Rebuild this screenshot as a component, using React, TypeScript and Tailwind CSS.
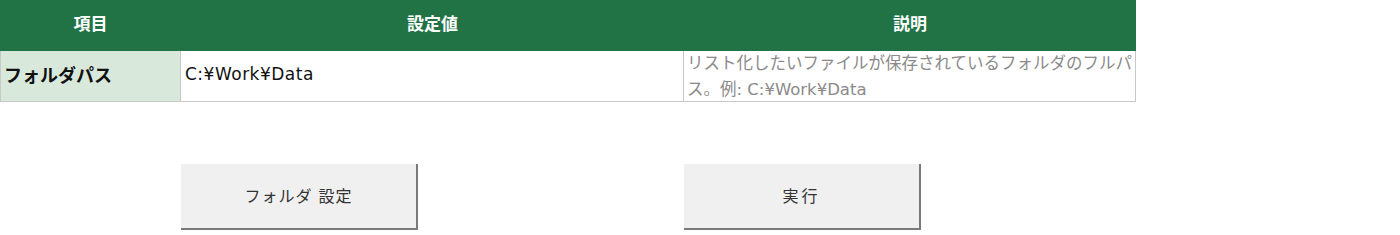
import React from "react";

const font = { fontFamily: '"DejaVu Sans", "Noto Sans CJK JP", sans-serif' };

export default function App() {
  return (
    <div className="w-[1400px] h-[235px] bg-white" style={font}>
      <div className="grid grid-cols-[181px_503px_452px]">
        <div className="h-[51px] bg-[#217346] flex items-center justify-center pb-[2px] text-white font-bold text-[17px]">項目</div>
        <div className="h-[51px] bg-[#217346] flex items-center justify-center pb-[2px] text-white font-bold text-[17px]">設定値</div>
        <div className="h-[51px] bg-[#217346] flex items-center justify-center pb-[2px] text-white font-bold text-[17px]">説明</div>

        <div className="h-[51px] bg-[#d8e9dc] border-l border-b border-r border-[#c8c8c8] flex items-center pl-[3px] pb-[2px] text-[18px] font-bold text-[#111]">フォルダパス</div>
        <div className="h-[51px] bg-white border-b border-r border-[#c8c8c8] flex items-center pl-[4px] pb-[2px] text-[17px] tracking-[0.5px] text-[#111]">C:¥Work¥Data</div>
        <div className="h-[51px] bg-white border-b border-r border-[#c8c8c8] pl-[3px] text-[16.5px] leading-[26px] text-[#8a8a8a] overflow-hidden whitespace-nowrap">
          <div>リスト化したいファイルが保存されているフォルダのフルパ</div>
          <div>ス。例: C:¥Work¥Data</div>
        </div>
      </div>

      <div className="grid grid-cols-[181px_503px_452px] mt-[62px]">
        <div />
        <div>
          <button className="w-[237px] h-[66px] bg-[#f0f0f0] border-r-2 border-b-2 border-[#7a7a7a] flex items-center justify-center pt-[1px] text-[16px] text-[#333] tracking-[1px]">
            フォルダ 設定
          </button>
        </div>
        <div>
          <button className="w-[237px] h-[66px] bg-[#f0f0f0] border-r-2 border-b-2 border-[#7a7a7a] flex items-center justify-center pt-[1px] text-[16px] text-[#333] tracking-[3px]">
            実行
          </button>
        </div>
      </div>
    </div>
  );
}
